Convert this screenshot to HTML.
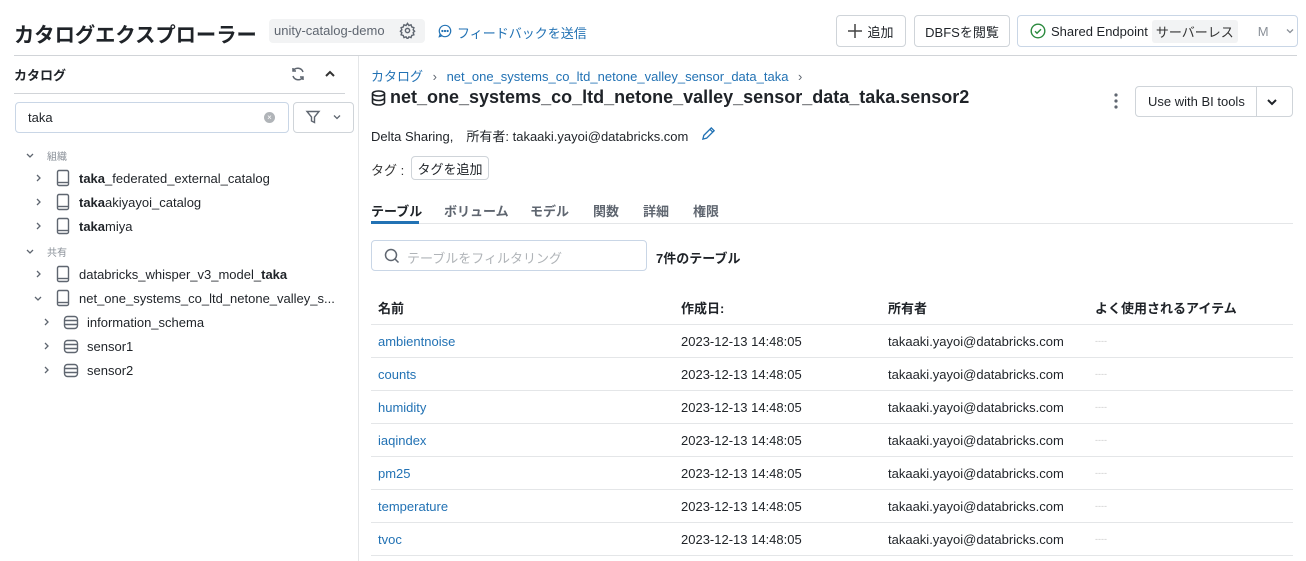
<!DOCTYPE html><html><head><meta charset="utf-8"><style>
*{box-sizing:border-box;margin:0;padding:0}
body{width:1306px;height:561px;background:#fff;font-family:"Liberation Sans","Noto Sans CJK JP",sans-serif;color:#1f2328;font-size:13px;position:relative;overflow:hidden}
.a{position:absolute;white-space:nowrap}
.btn{position:absolute;border:1px solid #cfd4d9;border-radius:4px;background:#fff;display:flex;align-items:center;justify-content:center;font-size:13px}
.blue{color:#2272b4}
.row{position:absolute;left:371px;width:922px;height:33px;border-top:1px solid #e4e6e8}
.row span{position:absolute;top:9px;font-size:13px}
.t{position:absolute;font-size:13px;white-space:nowrap}
</style></head><body>
<div class="a" style="left:14px;top:18px;font-size:20.3px;font-weight:bold;color:#1f2328">カタログエクスプローラー</div>
<div class="a" style="left:269px;top:19px;width:156px;height:24px;background:#f2f3f4;border-radius:4px"></div>
<div class="a" style="left:274px;top:23px;font-size:13px;color:#5f6670">unity-catalog-demo</div>
<svg class="a" style="left:399px;top:22px" width="17" height="17" viewBox="0 0 24 24" fill="none" stroke="#5f6670" stroke-width="2"><circle cx="12" cy="12" r="3"/><path d="M12 2l2 3 3-1 1 3 3 1-1 3 2 2-2 2 1 3-3 1-1 3-3-1-2 3-2-3-3 1-1-3-3-1 1-3-2-2 2-2-1-3 3-1 1-3 3 1z"/></svg>
<svg class="a" style="left:438px;top:24px" width="14" height="14" viewBox="0 0 16 16" fill="none" stroke="#2272b4" stroke-width="1.4"><path d="M8 1.5a6.5 6.5 0 1 1-5.5 10L1.5 14.5l3-1A6.5 6.5 0 0 1 8 1.5z"/><circle cx="5" cy="8" r=".6" fill="#2272b4"/><circle cx="8" cy="8" r=".6" fill="#2272b4"/><circle cx="11" cy="8" r=".6" fill="#2272b4"/></svg>
<div class="a blue" style="left:457px;top:23px">フィードバックを送信</div>
<div class="btn" style="left:836px;top:15px;width:70px;height:32px"><svg width="14" height="14" viewBox="0 0 14 14" stroke="#444" stroke-width="1.5"><path d="M7 0v14M0 7h14"/></svg><span style="margin-left:5px">追加</span></div>
<div class="btn" style="left:914px;top:15px;width:96px;height:32px">DBFSを閲覧</div>
<div class="btn" style="left:1017px;top:15px;width:281px;height:32px;justify-content:flex-start;padding-left:12px;border-color:#c9d6e6">
<svg width="16" height="16" viewBox="0 0 16 16" fill="none" stroke="#2b8a3e" stroke-width="1.4"><circle cx="8" cy="8" r="6.8"/><path d="M5 8.2l2 2 4-4"/></svg>
<span style="margin-left:5px">Shared Endpoint</span><span style="margin-left:4px;background:#f2f3f4;padding:2px 4px;border-radius:3px;color:#333">サーバーレス</span><span style="margin-left:20px;color:#8a9098">M</span><svg style="margin-left:16px" width="10" height="10" viewBox="0 0 10 10" fill="none" stroke="#8a9098" stroke-width="1.3"><path d="M2 3.5l3 3 3-3"/></svg></div>
<div class="a" style="left:14px;top:55px;width:1283px;height:1px;background:#d1d4d8"></div>
<div class="a" style="left:358px;top:56px;width:1px;height:505px;background:#e4e6e8"></div>
<!-- left -->
<div class="a" style="left:14px;top:65px;font-weight:bold;font-size:13px">カタログ</div>
<svg class="a" style="left:290px;top:66px" width="16" height="16" viewBox="0 0 16 16" fill="none" stroke="#5f6670" stroke-width="1.5"><path d="M13 6A5.5 5.5 0 0 0 3 5M3 10a5.5 5.5 0 0 0 10 1"/><path d="M3 2v3h3M13 14v-3h-3"/></svg>
<svg class="a" style="left:324px;top:68px" width="12" height="12" viewBox="0 0 12 12" fill="none" stroke="#333" stroke-width="2"><path d="M2 8l4-4 4 4"/></svg>
<div class="a" style="left:14px;top:93px;width:331px;height:1px;background:#d1d4d8"></div>
<div class="a" style="left:15px;top:102px;width:274px;height:31px;border:1px solid #c9d6e6;border-radius:4px"></div>
<div class="a" style="left:28px;top:110px">taka</div>
<div class="a" style="left:264px;top:112px;width:11px;height:11px;border-radius:50%;background:#b0b4b8;color:#fff;font-size:8px;line-height:11px;text-align:center">×</div>
<div class="a" style="left:293px;top:102px;width:61px;height:31px;border:1px solid #cfd4d9;border-radius:4px"></div>
<svg class="a" style="left:305px;top:109px" width="16" height="16" viewBox="0 0 16 16" fill="none" stroke="#5f6670" stroke-width="1.4"><path d="M2 2.5h12L9.5 8v5.5l-3-1.5V8z"/></svg>
<svg class="a" style="left:332px;top:112px" width="10" height="10" viewBox="0 0 10 10" fill="none" stroke="#5f6670" stroke-width="1.3"><path d="M2 3.5l3 3 3-3"/></svg>

<svg class="a" style="left:0;top:140px" width="358" height="250" fill="none" stroke="#5f6670" stroke-width="1.3">
<path d="M27 14l3 3 3-3" />
<path d="M37 35l3 3-3 3M37 59l3 3-3 3M37 83l3 3-3 3" />
<path d="M27 110l3 3 3-3" />
<path d="M37 131l3 3-3 3" />
<path d="M35 157l3 3 3-3" />
<path d="M45 179l3 3-3 3M45 203l3 3-3 3M45 227l3 3-3 3" />
<g stroke-width="1.4"><rect x="57.5" y="30.5" width="11" height="15" rx="1.5"/><path d="M57.5 42.5h11"/>
<rect x="57.5" y="54.5" width="11" height="15" rx="1.5"/><path d="M57.5 66.5h11"/>
<rect x="57.5" y="78.5" width="11" height="15" rx="1.5"/><path d="M57.5 90.5h11"/>
<rect x="57.5" y="126.5" width="11" height="15" rx="1.5"/><path d="M57.5 138.5h11"/>
<rect x="57.5" y="150.5" width="11" height="15" rx="1.5"/><path d="M57.5 162.5h11"/></g>
<g stroke-width="1.4"><rect x="64.5" y="176.5" width="13" height="12" rx="3"/><path d="M64.5 180.5h13M64.5 184.5h13"/>
<rect x="64.5" y="200.5" width="13" height="12" rx="3"/><path d="M64.5 204.5h13M64.5 208.5h13"/>
<rect x="64.5" y="224.5" width="13" height="12" rx="3"/><path d="M64.5 228.5h13M64.5 232.5h13"/></g>
</svg>
<div class="t" style="left:47px;top:148px;color:#8a9098;font-size:10px">組織</div>
<div class="t" style="left:79px;top:171px"><b>taka</b>_federated_external_catalog</div>
<div class="t" style="left:79px;top:195px"><b>taka</b>akiyayoi_catalog</div>
<div class="t" style="left:79px;top:219px"><b>taka</b>miya</div>
<div class="t" style="left:47px;top:244px;color:#8a9098;font-size:10px">共有</div>
<div class="t" style="left:79px;top:267px">databricks_whisper_v3_model_<b>taka</b></div>
<div class="t" style="left:79px;top:291px">net_one_systems_co_ltd_netone_valley_s...</div>
<div class="t" style="left:87px;top:315px">information_schema</div>
<div class="t" style="left:87px;top:339px">sensor1</div>
<div class="t" style="left:87px;top:363px">sensor2</div>
<!-- right -->
<div class="a blue" style="left:371px;top:66px">カタログ <span style="color:#5f6670;margin:0 6px">›</span> net_one_systems_co_ltd_netone_valley_sensor_data_taka <span style="color:#5f6670;margin-left:6px">›</span></div>
<svg class="a" style="left:371px;top:90px" width="15" height="16" viewBox="0 0 15 16" fill="none" stroke="#1f2328" stroke-width="1.6"><ellipse cx="7.5" cy="3.5" rx="6" ry="2.5"/><path d="M1.5 3.5v9c0 1.4 2.7 2.5 6 2.5s6-1.1 6-2.5v-9M1.5 8c0 1.4 2.7 2.5 6 2.5s6-1.1 6-2.5"/></svg>
<div class="a" style="left:390px;top:87px;font-size:18px;font-weight:bold">net_one_systems_co_ltd_netone_valley_sensor_data_taka.sensor2</div>
<svg class="a" style="left:1113px;top:93px" width="6" height="16"><circle cx="3" cy="2" r="1.6" fill="#5f6670"/><circle cx="3" cy="8" r="1.6" fill="#5f6670"/><circle cx="3" cy="14" r="1.6" fill="#5f6670"/></svg>
<div class="btn" style="left:1135px;top:86px;width:158px;height:31px;justify-content:flex-start"><span style="padding:0 12px">Use with BI tools</span><span style="border-left:1px solid #cfd4d9;height:29px;width:31px;display:flex;align-items:center;justify-content:center;margin-left:-1px"><svg width="12" height="12" viewBox="0 0 12 12" fill="none" stroke="#1f2328" stroke-width="2"><path d="M2 4l4 4 4-4"/></svg></span></div>
<div class="a" style="left:371px;top:126px">Delta Sharing,　所有者: takaaki.yayoi@databricks.com</div>
<svg class="a" style="left:701px;top:126px" width="15" height="15" viewBox="0 0 16 16" fill="none" stroke="#2272b4" stroke-width="1.4"><path d="M2 14l1-4 8-8 3 3-8 8z M9.5 3.5l3 3"/></svg>
<div class="a" style="left:371px;top:160px;color:#333">タグ :</div>
<div class="btn" style="left:411px;top:156px;width:78px;height:24px">タグを追加</div>
<div class="a" style="left:371px;top:201px;font-weight:bold">テーブル</div>
<div class="a" style="left:444px;top:201px;font-weight:bold;color:#5f6670">ボリューム</div>
<div class="a" style="left:530px;top:201px;font-weight:bold;color:#5f6670">モデル</div>
<div class="a" style="left:593px;top:201px;font-weight:bold;color:#5f6670">関数</div>
<div class="a" style="left:643px;top:201px;font-weight:bold;color:#5f6670">詳細</div>
<div class="a" style="left:693px;top:201px;font-weight:bold;color:#5f6670">権限</div>
<div class="a" style="left:371px;top:223px;width:922px;height:1px;background:#e4e6e8"></div>
<div class="a" style="left:371px;top:221px;width:48px;height:3px;background:#2272b4"></div>
<div class="a" style="left:371px;top:240px;width:276px;height:31px;border:1px solid #c9d6e6;border-radius:4px"></div>
<svg class="a" style="left:384px;top:248px" width="16" height="16" viewBox="0 0 16 16" fill="none" stroke="#5f6670" stroke-width="1.5"><circle cx="7" cy="7" r="5.5"/><path d="M11 11l3.5 3.5"/></svg>
<div class="a" style="left:407px;top:248px;color:#b0b4b8">テーブルをフィルタリング</div>
<div class="a" style="left:656px;top:248px;font-weight:bold">7件のテーブル</div>
<div class="a" style="left:378px;top:298px;font-weight:bold">名前</div>
<div class="a" style="left:681px;top:298px;font-weight:bold">作成日:</div>
<div class="a" style="left:888px;top:298px;font-weight:bold">所有者</div>
<div class="a" style="left:1095px;top:298px;font-weight:bold">よく使用されるアイテム</div>
<div class="row" style="top:324px"><span class="blue" style="left:7px">ambientnoise</span><span style="left:310px">2023-12-13 14:48:05</span><span style="left:517px">takaaki.yayoi@databricks.com</span><span style="left:724px;color:#ccc;font-size:9px;top:11px">----</span></div>
<div class="row" style="top:357px"><span class="blue" style="left:7px">counts</span><span style="left:310px">2023-12-13 14:48:05</span><span style="left:517px">takaaki.yayoi@databricks.com</span><span style="left:724px;color:#ccc;font-size:9px;top:11px">----</span></div>
<div class="row" style="top:390px"><span class="blue" style="left:7px">humidity</span><span style="left:310px">2023-12-13 14:48:05</span><span style="left:517px">takaaki.yayoi@databricks.com</span><span style="left:724px;color:#ccc;font-size:9px;top:11px">----</span></div>
<div class="row" style="top:423px"><span class="blue" style="left:7px">iaqindex</span><span style="left:310px">2023-12-13 14:48:05</span><span style="left:517px">takaaki.yayoi@databricks.com</span><span style="left:724px;color:#ccc;font-size:9px;top:11px">----</span></div>
<div class="row" style="top:456px"><span class="blue" style="left:7px">pm25</span><span style="left:310px">2023-12-13 14:48:05</span><span style="left:517px">takaaki.yayoi@databricks.com</span><span style="left:724px;color:#ccc;font-size:9px;top:11px">----</span></div>
<div class="row" style="top:489px"><span class="blue" style="left:7px">temperature</span><span style="left:310px">2023-12-13 14:48:05</span><span style="left:517px">takaaki.yayoi@databricks.com</span><span style="left:724px;color:#ccc;font-size:9px;top:11px">----</span></div>
<div class="row" style="top:522px;border-bottom:1px solid #e4e6e8;height:34px"><span class="blue" style="left:7px">tvoc</span><span style="left:310px">2023-12-13 14:48:05</span><span style="left:517px">takaaki.yayoi@databricks.com</span><span style="left:724px;color:#ccc;font-size:9px;top:11px">----</span></div>
</body></html>
